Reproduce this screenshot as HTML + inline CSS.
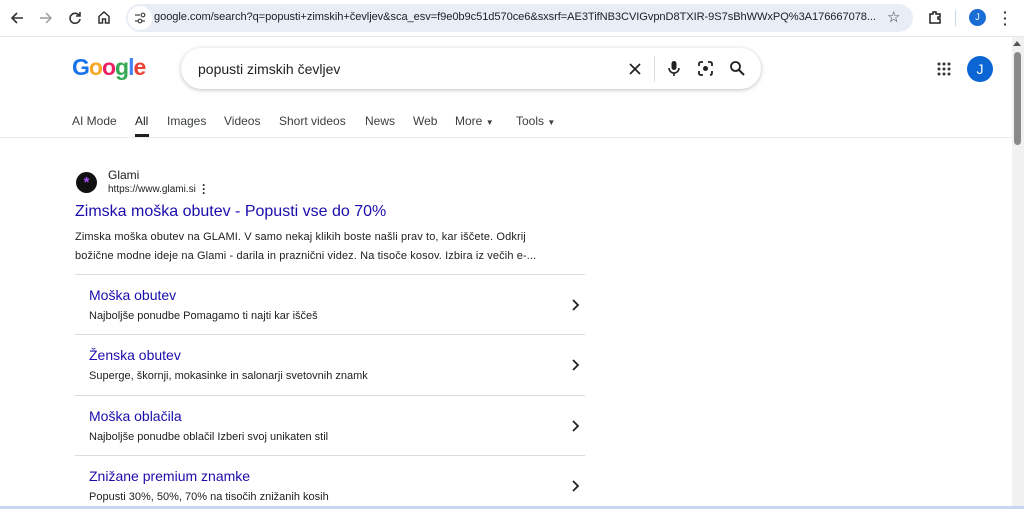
<!DOCTYPE html>
<html><head><meta charset="utf-8"><style>
*{margin:0;padding:0;box-sizing:border-box}
body{width:1024px;height:509px;overflow:hidden;background:#fff;font-family:"Liberation Sans",Arial,sans-serif;position:relative;color:#202124}
.a{position:absolute}
.tab{position:absolute;top:114px;font-size:12px;color:#3c4043}
.sl{position:absolute;left:75px;width:510px;height:60px;border-top:1px solid #dadce0}
.sl .t{position:absolute;left:14px;top:12px;font-size:14px;color:#1a0dab}
.sl .d{position:absolute;left:14px;top:35px;font-size:11px;color:#202124}
.sl svg{position:absolute;left:497px;top:24px}
</style></head><body>
<div class="a" style="left:0;top:0;width:1024px;height:37px;background:#fff;border-bottom:1px solid #e6e6e6"></div>
<svg class="a" style="left:10px;top:11px" width="14" height="14" viewBox="0 0 14 14"><path d="M13 7H2M7 2L2 7l5 5" stroke="#333" stroke-width="1.6" fill="none"/></svg>
<svg class="a" style="left:39px;top:11px" width="14" height="14" viewBox="0 0 14 14"><path d="M1 7h11M7 2l5 5-5 5" stroke="#999" stroke-width="1.4" fill="none"/></svg>
<svg class="a" style="left:68px;top:11px" width="14" height="14" viewBox="0 0 14 14"><path d="M11.5 5A5 5 0 1 0 12 8" stroke="#333" stroke-width="1.6" fill="none"/><path d="M12 1v4H8" stroke="#333" stroke-width="1.6" fill="none"/></svg>
<svg class="a" style="left:97px;top:10px" width="14" height="14" viewBox="0 0 14 14"><path d="M2 6.5L7 2l5 4.5V13H8.5V9h-3v4H2z" stroke="#333" stroke-width="1.5" fill="none"/></svg>
<div class="a" style="left:126px;top:4px;width:787px;height:28px;border-radius:14px;background:#e9eef6"></div>
<div class="a" style="left:128px;top:6px;width:24px;height:24px;border-radius:12px;background:#fff"></div>
<svg class="a" style="left:134px;top:12px" width="12" height="12" viewBox="0 0 12 12"><path d="M1 3h5M1 9h3M8 9h3" stroke="#444" stroke-width="1.3"/><circle cx="9" cy="3" r="1.8" stroke="#444" stroke-width="1.2" fill="none"/><circle cx="6" cy="9" r="1.8" stroke="#444" stroke-width="1.2" fill="none"/></svg>
<div class="a" style="left:154px;top:11px;font-size:11.1px;color:#202124;white-space:nowrap;letter-spacing:-0.07px">google.com/search?q=popusti+zimskih+čevljev&amp;sca_esv=f9e0b9c51d570ce6&amp;sxsrf=AE3TifNB3CVIGvpnD8TXIR-9S7sBhWWxPQ%3A176667078...</div>
<div class="a" style="left:887px;top:8px;font-size:15px;color:#333">☆</div>
<svg class="a" style="left:928px;top:10px" width="15" height="15" viewBox="0 0 15 15"><path d="M2 4h3V2h3v2h4v3h-2v2h2v4H2z" stroke="#222" stroke-width="1.5" fill="none"/></svg>
<div class="a" style="left:955px;top:10px;width:1px;height:16px;background:#c8d6f0"></div>
<div class="a" style="left:969px;top:9px;width:17px;height:17px;border-radius:50%;background:#1a6dd4;color:#fff;font-size:9px;text-align:center;line-height:17px">J</div>
<div class="a" style="left:1003px;top:9px;font-size:14px;font-weight:bold;color:#333;line-height:6px">·<br>·<br>·</div>
<div class="a" style="left:1012px;top:37px;width:12px;height:472px;background:#f1f1f1"></div>
<div class="a" style="left:1014px;top:52px;width:7px;height:93px;border-radius:4px;background:#8a8a8a"></div>
<div class="a" style="left:1013px;top:41px;width:0;height:0;border-left:4px solid transparent;border-right:4px solid transparent;border-bottom:5px solid #555"></div>
<div class="a" style="left:72px;top:54px;font-size:23px;font-weight:bold;letter-spacing:-1px"><span style="color:#1a73e8">G</span><span style="color:#f9a825">o</span><span style="color:#e91e63">o</span><span style="color:#34a853">g</span><span style="color:#4285f4">l</span><span style="color:#ea4335">e</span></div>
<div class="a" style="left:181px;top:48px;width:580px;height:41px;border-radius:21px;background:#fff;box-shadow:0 1px 4px rgba(32,33,36,.28)"></div>
<div class="a" style="left:198px;top:61px;font-size:14px;color:#202124">popusti zimskih čevljev</div>
<svg class="a" style="left:628px;top:62px" width="14" height="14" viewBox="0 0 14 14"><path d="M2 2l10 10M12 2L2 12" stroke="#222" stroke-width="1.7"/></svg>
<div class="a" style="left:654px;top:56px;width:1px;height:26px;background:#dadce0"></div>
<svg class="a" style="left:667px;top:60px" width="14" height="18" viewBox="0 0 14 18"><rect x="4.5" y="1" width="5" height="9" rx="2.5" fill="#222"/><path d="M2 8a5 5 0 0 0 10 0M7 13v3" stroke="#222" stroke-width="1.6" fill="none"/></svg>
<svg class="a" style="left:697px;top:60px" width="17" height="17" viewBox="0 0 17 17"><path d="M2 6V4q0-2 2-2h2M11 2h2q2 0 2 2v2M15 11v2q0 2-2 2M2 11v2q0 2 2 2h2" stroke="#222" stroke-width="1.8" fill="none"/><circle cx="8.5" cy="8.5" r="2.5" fill="#222"/></svg>
<svg class="a" style="left:729px;top:60px" width="16" height="16" viewBox="0 0 16 16"><circle cx="6.5" cy="6.5" r="4.5" stroke="#222" stroke-width="1.8" fill="none"/><path d="M10 10l5 5" stroke="#222" stroke-width="2"/></svg>
<svg class="a" style="left:937px;top:62px" width="14" height="14" viewBox="0 0 14 14" fill="#333"><circle cx="2" cy="2" r="1.5"/><circle cx="7" cy="2" r="1.5"/><circle cx="12" cy="2" r="1.5"/><circle cx="2" cy="7" r="1.5"/><circle cx="7" cy="7" r="1.5"/><circle cx="12" cy="7" r="1.5"/><circle cx="2" cy="12" r="1.5"/><circle cx="7" cy="12" r="1.5"/><circle cx="12" cy="12" r="1.5"/></svg>
<div class="a" style="left:967px;top:56px;width:26px;height:26px;border-radius:50%;background:#0b66d3;color:#fff;font-size:14px;text-align:center;line-height:26px">J</div>
<div class="tab" style="left:72px">AI Mode</div>
<div class="tab" style="left:135px;color:#202124">All</div>
<div class="a" style="left:135px;top:134px;width:14px;height:3px;background:#202124"></div>
<div class="tab" style="left:167px">Images</div>
<div class="tab" style="left:224px">Videos</div>
<div class="tab" style="left:279px">Short videos</div>
<div class="tab" style="left:365px">News</div>
<div class="tab" style="left:413px">Web</div>
<div class="tab" style="left:455px">More <span style="font-size:8px">▼</span></div>
<div class="tab" style="left:516px">Tools <span style="font-size:8px">▼</span></div>
<div class="a" style="left:0;top:137px;width:1012px;height:1px;background:#ebebeb"></div>
<div class="a" style="left:76px;top:172px;width:21px;height:21px;border-radius:50%;background:#111;color:#a855f7;font-size:15px;text-align:center;line-height:22px;font-weight:bold">*</div>
<div class="a" style="left:108px;top:168px;font-size:12px;color:#202124">Glami</div>
<div class="a" style="left:108px;top:184px;font-size:10px;color:#202124">https://www.glami.si</div>
<div class="a" style="left:202px;top:183px;font-size:12px;font-weight:bold;line-height:4px">·<br>·<br>·</div>
<div class="a" style="left:75px;top:203px;font-size:16px;color:#1a0dab">Zimska moška obutev - Popusti vse do 70%</div>
<div class="a" style="left:75px;top:228px;font-size:11px;color:#202124;line-height:19px;width:520px;letter-spacing:0.12px">Zimska moška obutev na GLAMI. V samo nekaj klikih boste našli prav to, kar iščete. Odkrij<br>božične modne ideje na Glami - darila in praznični videz. Na tisoče kosov. Izbira iz večih e-...</div>
<div class="sl" style="top:274px"><div class="t">Moška obutev</div><div class="d">Najboljše ponudbe Pomagamo ti najti kar iščeš</div><svg width="8" height="12" viewBox="0 0 8 12"><path d="M1 1l5 5-5 5" stroke="#222" stroke-width="1.8" fill="none"/></svg></div>
<div class="sl" style="top:334px"><div class="t">Ženska obutev</div><div class="d">Superge, škornji, mokasinke in salonarji svetovnih znamk</div><svg width="8" height="12" viewBox="0 0 8 12"><path d="M1 1l5 5-5 5" stroke="#222" stroke-width="1.8" fill="none"/></svg></div>
<div class="sl" style="top:395px"><div class="t">Moška oblačila</div><div class="d">Najboljše ponudbe oblačil Izberi svoj unikaten stil</div><svg width="8" height="12" viewBox="0 0 8 12"><path d="M1 1l5 5-5 5" stroke="#222" stroke-width="1.8" fill="none"/></svg></div>
<div class="sl" style="top:455px"><div class="t">Znižane premium znamke</div><div class="d">Popusti 30%, 50%, 70% na tisočih znižanih kosih</div><svg width="8" height="12" viewBox="0 0 8 12"><path d="M1 1l5 5-5 5" stroke="#222" stroke-width="1.8" fill="none"/></svg></div>
<div class="a" style="left:0;top:506px;width:1024px;height:3px;background:#c9d7ee"></div>
</body></html>
